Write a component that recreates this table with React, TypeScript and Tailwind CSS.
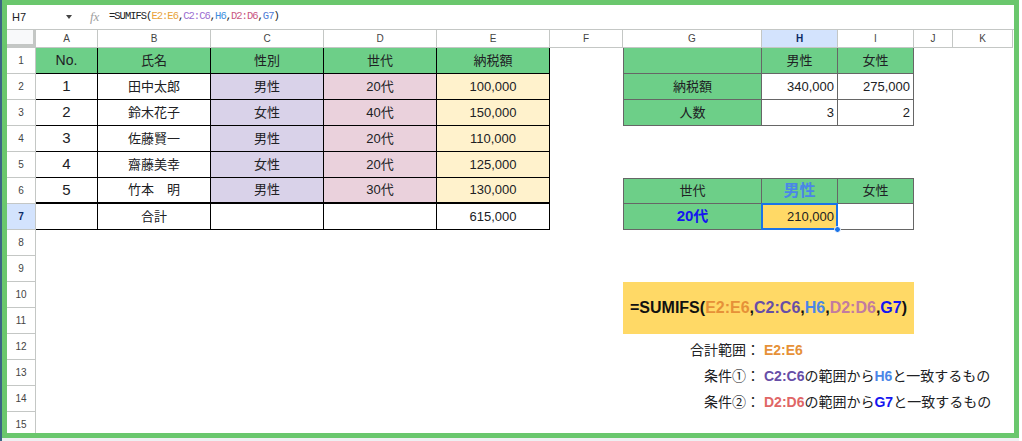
import React from "react";

const font = "font-['Liberation_Sans','Noto_Sans_CJK_JP',sans-serif]";

// cell styles (text colour comes from the root so cells can override it)
const L = "flex items-center justify-center border-r border-b border-black text-[13px]";
const L6 = "flex items-center justify-center border-r border-b-2 border-black text-[13px]";
const R = "flex items-center border-r border-b border-[#666] text-[13px]";
const GREEN = "bg-[#6dcf88]";
const COLS = ["A", "B", "C", "D", "E", "F", "G", "H", "I", "J", "K"];

const people = [
  ["1", "田中太郎", "男性", "20代", "100,000"],
  ["2", "鈴木花子", "女性", "40代", "150,000"],
  ["3", "佐藤賢一", "男性", "20代", "110,000"],
  ["4", "齋藤美幸", "女性", "20代", "125,000"],
  ["5", "竹本　明", "男性", "30代", "130,000"],
];

const RowHead = ({ n, sel }: { n: number; sel?: boolean }) => (
  <div
    className={
      sel
        ? "flex items-center justify-center border-r border-b border-[#c4c7c5] bg-[#d3e3fd] text-[10px] font-bold text-[#0b2a66]"
        : "flex items-center justify-center border-r border-b border-[#c4c7c5] bg-white text-[10px] text-[#444]"
    }
  >
    {n}
  </div>
);

const Empty = ({ count }: { count: number }) => (
  <>
    {Array.from({ length: count }).map((_, i) => (
      <div key={i} />
    ))}
  </>
);

const rightSide = (row: number) => {
  if (row === 2)
    return (
      <>
        <div className={`${R} ${GREEN} border-l justify-center`}>納税額</div>
        <div className={`${R} justify-end pr-[3px]`}>340,000</div>
        <div className={`${R} justify-end pr-[3px]`}>275,000</div>
      </>
    );
  if (row === 3)
    return (
      <>
        <div className={`${R} ${GREEN} border-l justify-center`}>人数</div>
        <div className={`${R} justify-end pr-[3px]`}>3</div>
        <div className={`${R} justify-end pr-[3px]`}>2</div>
      </>
    );
  if (row === 6)
    return (
      <>
        <div className={`${R} ${GREEN} border-l border-t justify-center`}>世代</div>
        <div className={`${R} ${GREEN} border-t justify-center`}>
          <span className="text-[16px] font-bold text-[#4a86e8]">男性</span>
        </div>
        <div className={`${R} ${GREEN} border-t justify-center`}>女性</div>
      </>
    );
  return <Empty count={3} />;
};

export default function App() {
  return (
    <div className={`flex w-[1022px] h-[441px] overflow-hidden bg-[#eef0f2] text-[#202124] ${font}`}>
      <div className="w-[2px] h-full bg-[#3b6683]" />
      <div className="w-[1017px] h-[438px] border-[5px] border-[#6ac76d] bg-white flex flex-col overflow-hidden">
        {/* formula bar */}
        <div className="h-[25px] shrink-0 flex items-center border-b border-[#c4c7c5]">
          <span className="w-[59px] pl-[5px] text-[11px]">H7</span>
          <svg width="6" height="4" viewBox="0 0 6 4">
            <path d="M0 0h6L3 4z" fill="#444" />
          </svg>
          <span className="ml-[18px] w-[14px] text-[13px] italic text-[#a0a0a0] font-['Liberation_Serif',serif]">fx</span>
          <span className="ml-[5px] text-[10.5px] tracking-[-1px] font-['Liberation_Mono',monospace]">
            =SUMIFS(<span className="text-[#e8a33a]">E2:E6</span>,<span className="text-[#9a6bd1]">C2:C6</span>,
            <span className="text-[#3d8fe0]">H6</span>,<span className="text-[#c9567f]">D2:D6</span>,
            <span className="text-[#4e7bd6]">G7</span>)
          </span>
        </div>

        {/* sheet */}
        <div className="grid grid-cols-[29px_62px_113px_113px_113px_113px_73px_139px_76px_76px_39px_60px] grid-rows-[18px_repeat(15,26px)]">
          <div className="bg-[#f8f9fa] border-r-[3px] border-b-[4px] border-[#c4c7c5]" />
          {COLS.map((c) => (
            <div
              key={c}
              className={
                c === "H"
                  ? "flex items-center justify-center border-r border-b border-[#c4c7c5] bg-[#d3e3fd] text-[10px] font-bold text-[#0b2a66]"
                  : "flex items-center justify-center border-r border-b border-[#c4c7c5] bg-white text-[10px] text-[#444]"
              }
            >
              {c}
            </div>
          ))}

          {/* row 1 */}
          <RowHead n={1} />
          <div className={`${L} ${GREEN} text-[14px]`}>No.</div>
          <div className={`${L} ${GREEN}`}>氏名</div>
          <div className={`${L} ${GREEN}`}>性別</div>
          <div className={`${L} ${GREEN}`}>世代</div>
          <div className={`${L} ${GREEN}`}>納税額</div>
          <div />
          <div className={`${R} ${GREEN} border-l`} />
          <div className={`${R} ${GREEN} justify-center`}>男性</div>
          <div className={`${R} ${GREEN} justify-center`}>女性</div>
          <Empty count={2} />

          {/* rows 2-6 */}
          {people.map((p, i) => {
            const row = i + 2;
            const base = row === 6 ? L6 : L;
            return (
              <React.Fragment key={row}>
                <RowHead n={row} />
                <div className={base}>
                  <span className="text-[15px]">{p[0]}</span>
                </div>
                <div className={base}>{p[1]}</div>
                <div className={`${base} bg-[#d9d2e9]`}>{p[2]}</div>
                <div className={`${base} bg-[#ead1dc]`}>{p[3]}</div>
                <div className={`${base} bg-[#fff2cc]`}>{p[4]}</div>
                <div />
                {rightSide(row)}
                <Empty count={2} />
              </React.Fragment>
            );
          })}

          {/* row 7 */}
          <RowHead n={7} sel />
          <div className={L} />
          <div className={L}>合計</div>
          <div className={L} />
          <div className={L} />
          <div className={L}>615,000</div>
          <div />
          <div className={`${R} ${GREEN} border-l justify-center`}>
            <span className="text-[15px] font-bold text-[#1515f0]">20代</span>
          </div>
          <div className={`${R} relative justify-end pr-[3px] bg-[#ffd966]`}>
            210,000
            <span className="absolute -inset-px border-2 border-[#1a73e8]" />
            <span className="absolute -right-[4px] -bottom-[4px] w-[7px] h-[7px] rounded-full bg-[#1a73e8] border border-white" />
          </div>
          <div className={R} />
          <Empty count={2} />

          {/* rows 8-9 */}
          <RowHead n={8} />
          <Empty count={11} />
          <RowHead n={9} />
          <Empty count={11} />

          {/* rows 10-11: formula box */}
          <RowHead n={10} />
          <Empty count={6} />
          <div className="col-span-3 row-span-2 flex items-center justify-center bg-[#ffd966] text-[16px] font-bold text-[#111]">
            =SUMIFS(<span className="text-[#e69138]">E2:E6</span>,<span className="text-[#674ea7]">C2:C6</span>,
            <span className="text-[#4a86e8]">H6</span>,<span className="text-[#c27ba0]">D2:D6</span>,
            <span className="text-[#1515f0]">G7</span>)
          </div>
          <Empty count={2} />
          <RowHead n={11} />
          <Empty count={8} />

          {/* rows 12-14: explanation */}
          <RowHead n={12} />
          <Empty count={6} />
          <div className="flex items-end justify-end pr-[2px] text-[14px] leading-[19px]">合計範囲：</div>
          <div className="col-span-4 flex items-end pl-[2px] text-[14px] leading-[19px]">
            <span className="font-bold text-[#e69138]">E2:E6</span>
          </div>

          <RowHead n={13} />
          <Empty count={6} />
          <div className="flex items-end justify-end pr-[2px] text-[14px] leading-[19px]">条件①：</div>
          <div className="col-span-4 flex items-end pl-[2px] text-[14px] leading-[19px]">
            <span className="font-bold text-[#674ea7]">C2:C6</span>の範囲から
            <span className="font-bold text-[#4a86e8]">H6</span>と一致するもの
          </div>

          <RowHead n={14} />
          <Empty count={6} />
          <div className="flex items-end justify-end pr-[2px] text-[14px] leading-[19px]">条件②：</div>
          <div className="col-span-4 flex items-end pl-[2px] text-[14px] leading-[19px]">
            <span className="font-bold text-[#e06666]">D2:D6</span>の範囲から
            <span className="font-bold text-[#1515f0]">G7</span>と一致するもの
          </div>

          <RowHead n={15} />
          <Empty count={11} />
        </div>
      </div>
      <div className="w-[3px] h-full bg-white" />
    </div>
  );
}
